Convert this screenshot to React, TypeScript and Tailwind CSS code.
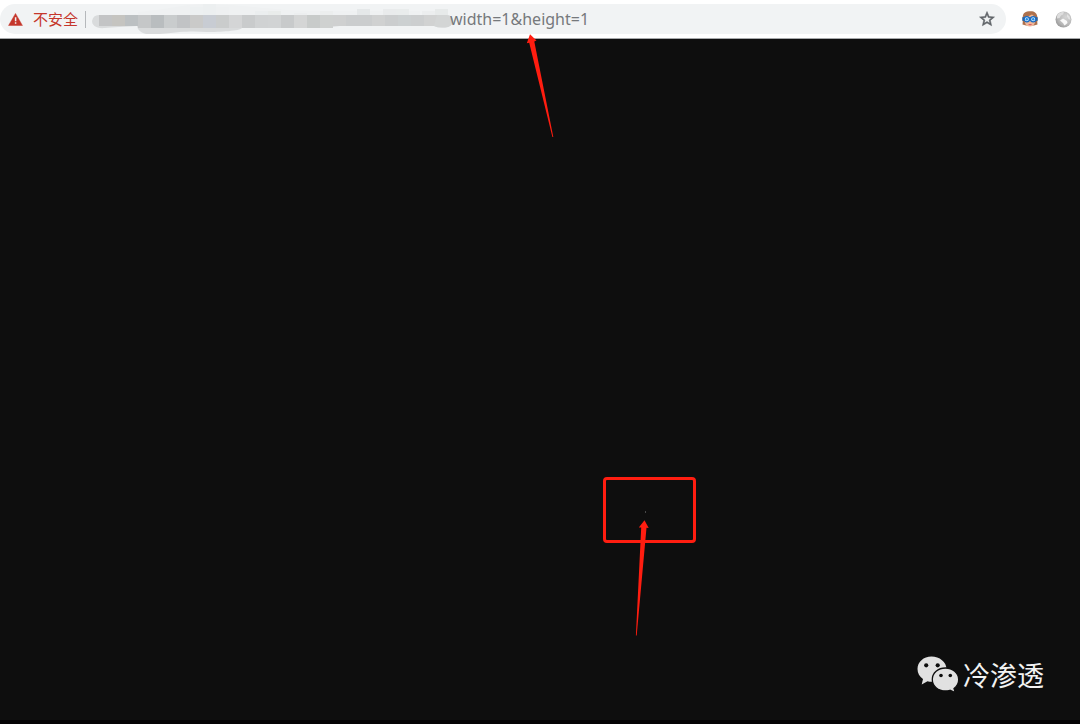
import React, { useState } from "react";

const TILE_COLORS = [
  "#c3c4c5", "#c5c4c0", "#bcc0c2", "#c5c7c8", "#b9bdbf", "#c9cccd", "#c1c3c5",
  "#cacac9", "#c8ccd3", "#cacccc", "#d4d5d6", "#c9cbcc", "#d0d2d3", "#d1d3d4",
  "#c8cacb", "#d4d5d5", "#c8cbca", "#cfd1d0", "#cfd0d0", "#cbcdce", "#cbcdce",
  "#d0d1d1", "#cbcdce", "#ccd0d1", "#cccecf", "#d1d2d2", "#c9cccc",
];

const FAINT_TILES = [
  { x: 190, y: 7, c: "#edf0f1" }, { x: 203, y: 4, c: "#eceff0" },
  { x: 216, y: 7, c: "#eef0f1" }, { x: 229, y: 7, c: "#eff1f2" },
  { x: 255, y: 11, c: "#ebeeef" }, { x: 268, y: 11, c: "#e9eceb" },
  { x: 294, y: 13, c: "#eceeef" }, { x: 320, y: 11, c: "#eceeee" },
  { x: 357, y: 9, c: "#e5e8e9" }, { x: 383, y: 9, c: "#e9ebec" },
  { x: 396, y: 9, c: "#e9ecec" }, { x: 422, y: 11, c: "#eceeef" },
  { x: 435, y: 9, c: "#e7eaea" },
];

function WarningIcon() {
  return (
    <svg viewBox="0 0 14 12" className="h-[13px] w-[15px] shrink-0" aria-hidden="true">
      <path d="M7 0.300 13.500 11.600H0.500Z" fill="#c5362b" stroke="#c5362b" strokeWidth="0.400" />
      <path d="M6.400 4h1.400v3.600H6.400zM6.400 8.600h1.400v1.400H6.400z" fill="#f1f3f4" />
    </svg>
  );
}

function Mosaic() {
  return (
    <svg viewBox="92 4 361 30" className="h-[30px] w-[361px] shrink-0" aria-hidden="true">
      <path d="M138 12C170 9 180 5 203 4C240 4 270 10 310 11L420 11V16H138Z" fill="#eff1f2" />
      {FAINT_TILES.map((t) => (
        <rect key={t.x} x={t.x} y={t.y} width={13} height={15 - t.y} fill={t.c} />
      ))}
      <path
        d="M99 15H446Q453 15 453 21Q452 27 445 27.500Q438 28 434 26H340C320 28 305 28 290 28H242C240 31 220 32 207 32C194 31 185 31 160 34C150 35 142 35 138 29L137 26C125 27 112 27 105 28C96 29 92 25 92 21Q93 15 99 15Z"
        fill="#d9dbdc"
      />
      {TILE_COLORS.map((c, i) => (
        <rect key={i} x={99 + i * 13} y={15} width={i === 26 ? 10 : 13} height={i < 3 ? 11 : i < 18 ? 13 : 11} fill={c} />
      ))}
      <path d="M437 15H447Q453 16 453 21Q452 27 445 27.500Q438 28 434 26Z" fill="#d3d5d5" />
    </svg>
  );
}

function StarIcon() {
  return (
    <svg viewBox="0 0 24 24" className="size-[18px]" aria-hidden="true">
      <path
        fill="#5f6368"
        stroke="#5f6368"
        strokeWidth="0.700"
        d="m22 9.240-7.190-.62L12 2 9.190 8.630 2 9.240l5.460 4.730L5.820 21 12 17.270 18.180 21l-1.630-7.030L22 9.240zM12 15.400l-3.760 2.270 1-4.280-3.320-2.880 4.380-.38L12 6.100l1.710 4.040 4.380.38-3.320 2.880 1 4.280L12 15.400z"
      />
    </svg>
  );
}

function GogglesIcon() {
  return (
    <svg viewBox="0 0 16 16" className="size-4" aria-hidden="true">
      <path d="M0.500 13.500C1.200 10 0.200 7 1 4C2 1 5 0 8 0.300C12 0 15 2 15.400 6C15.700 9 15 11 15.500 13.500L12 14.500H4Z" fill="#ad714d" />
      <path d="M4 6C6 5.500 8 4.500 10 3.500L13 6V11.500C12.500 14 10 15.600 8 15.600C5.500 15.600 3.200 14 3 11.500Z" fill="#f0b799" />
      <path d="M6 13.300Q8 12.600 10.200 13.300Q8 15 6 13.300Z" fill="#d85a65" />
      <path d="M0.300 6.200H15.700V9.800H0.300Z" fill="#2862a4" />
      <circle cx="4.800" cy="8.200" r="2.600" fill="#d9efff" stroke="#176bc4" strokeWidth="1.200" />
      <circle cx="11.200" cy="8.200" r="2.600" fill="#d9efff" stroke="#176bc4" strokeWidth="1.200" />
      <circle cx="4.800" cy="8.200" r="1.200" fill="#258be4" />
      <circle cx="11.200" cy="8.200" r="1.200" fill="#258be4" />
    </svg>
  );
}

function GlobeIcon() {
  return (
    <svg viewBox="0 0 17 17" className="size-[17px]" aria-hidden="true">
      <defs>
        <radialGradient id="globe" cx="0.65" cy="0.35" r="0.7">
          <stop offset="0" stopColor="#d4d4d4" />
          <stop offset="0.7" stopColor="#b8b8b8" />
          <stop offset="1" stopColor="#9c9c9c" />
        </radialGradient>
      </defs>
      <circle cx="8.500" cy="8.500" r="8" fill="url(#globe)" />
      <path d="M3 3Q6 0.500 9 1.200L8 3.500 6 4.500 4.500 7 2 7.500Q1.500 5 3 3Z" fill="#dedede" />
      <path d="M5 9.500L8 7.500 12 10 12.500 12 9.500 14.500 8 12Z" fill="#f8f8f8" />
      <path d="M12 3L14.500 5.500 15.500 9 13.500 8 12 5.500Z" fill="#e2e2e2" />
    </svg>
  );
}

function WeChatIcon() {
  return (
    <svg viewBox="0 0 42 37" className="h-[37px] w-[42px] shrink-0" aria-hidden="true">
      <path d="M14.500 0.500C6.500 0.500 0.500 6 0.500 13C0.500 17.200 2.600 20.700 6 23L4.700 28.500L10.500 25.200Q12.500 25.800 14.500 25.800C23 25.800 29.500 20 29.500 13C29.500 6 22.500 0.500 14.500 0.500Z" fill="#e1e1e1" />
      <path d="M28.500 12C21 12 15.300 17 15.300 23.500C15.300 30 21 35 28.500 35Q31 35 33 34.300L38.300 36.700L37 32.500C40 30.300 41.700 27 41.700 23.500C41.700 17 35.500 12 28.500 12Z" fill="#e1e1e1" stroke="#0e0e0e" strokeWidth="1.300" />
      <g fill="#0e0e0e">
        <circle cx="9.200" cy="9.300" r="2.100" />
        <circle cx="20.700" cy="9.300" r="2.100" />
        <circle cx="24" cy="19.500" r="1.800" />
        <circle cx="33.300" cy="19.500" r="1.800" />
      </g>
    </svg>
  );
}

export default function App() {
  const [query, setQuery] = useState("width=1&height=1");
  return (
    <div className="relative flex min-h-screen flex-col overflow-hidden bg-[#0e0e0e] font-['Noto_Sans','Noto_Sans_CJK_SC',sans-serif]">
      <header className="flex h-[39px] items-start border-b border-[#a6a8aa] bg-white pt-1 pr-2">
        <div className="flex h-[30px] flex-1 items-center rounded-full bg-[#f1f3f4] pr-2.5 pl-2">
          <WarningIcon />
          <label htmlFor="address" className="ml-2.5 w-[45px] shrink-0 text-[15px] leading-[30px] whitespace-nowrap text-[#c5362b]">
            不安全
          </label>
          <span className="mr-1.5 ml-[7px] h-[17px] w-px shrink-0 bg-[#b5b8bb]" />
          <Mosaic />
          <input
            id="address"
            value={query}
            onChange={(e) => setQuery(e.target.value)}
            className="-ml-[3px] h-[30px] min-w-0 flex-1 bg-transparent text-base text-[#76797c] outline-none"
          />
          <button type="button" aria-label="Bookmark" className="shrink-0">
            <StarIcon />
          </button>
        </div>
        <div className="ml-4 flex h-[30px] items-center gap-[17px]">
          <button type="button" aria-label="Goggles extension">
            <GogglesIcon />
          </button>
          <button type="button" aria-label="Globe extension">
            <GlobeIcon />
          </button>
        </div>
      </header>

      <main className="flex flex-1 flex-col justify-end">
        <div className="flex items-start justify-end gap-1 pr-9 pb-6">
          <WeChatIcon />
          <span className="text-[27px] leading-10 text-[#f2f2f2]">冷渗透</span>
        </div>
        <div className="h-1 bg-[#050304]" />
      </main>

      <svg viewBox="0 0 28 104" className="pointer-events-none absolute top-[34px] left-[526px] h-[104px] w-7" aria-hidden="true">
        <path d="M4 0.300L10.500 6.500L8.300 7.500L27.300 103L26.400 103L3.200 8.700L0.800 9.200Z" fill="#ff1d10" />
      </svg>
      <div className="absolute top-[477px] left-[603px] h-[66px] w-[93px] rounded border-3 border-[#ff1d10]" />
      <div className="absolute top-[511px] left-[645px] h-0.5 w-px bg-[#484848]" />
      <svg viewBox="0 0 16 116" className="pointer-events-none absolute top-[520px] left-[634px] h-[116px] w-4" aria-hidden="true">
        <path d="M10.500 0.300L14.700 8L12.500 7.800L2.700 115.500H1.900L7.200 7.500L4.800 7.500Z" fill="#ff1d10" />
      </svg>
    </div>
  );
}
